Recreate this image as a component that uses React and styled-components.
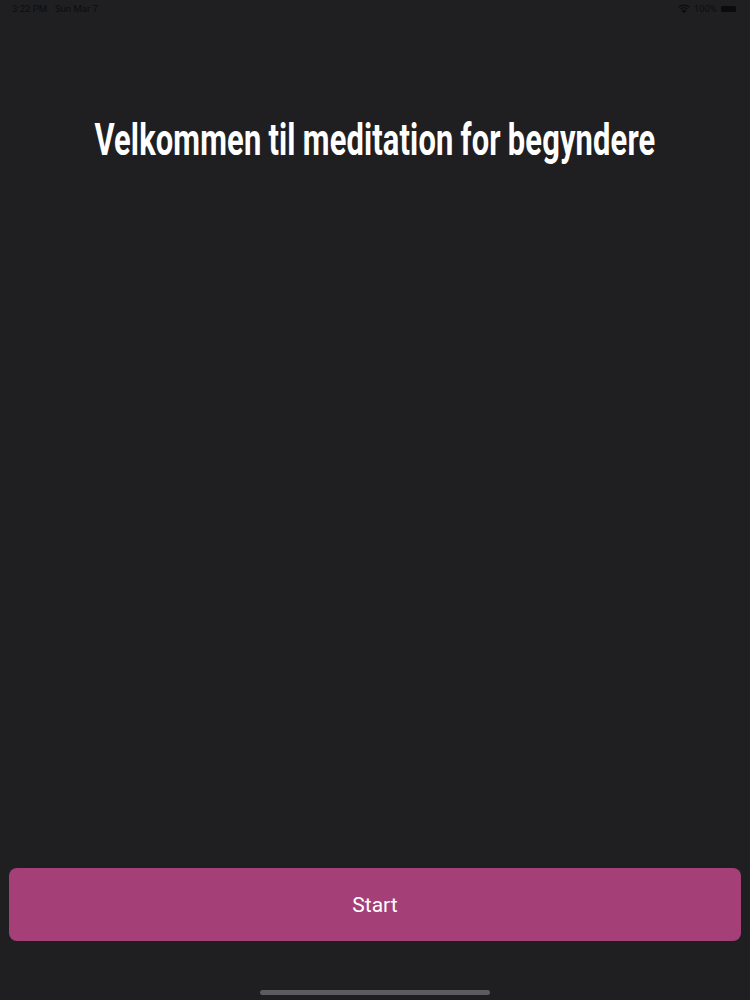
import styled, { createGlobalStyle } from "styled-components";

const GlobalStyle = createGlobalStyle`
  html, body {
    margin: 0;
    padding: 0;
    background-color: #1f1f21;
  }
`;

const Screen = styled.div`
  width: 750px;
  height: 1000px;
  background-color: #1f1f21;
  display: flex;
  flex-direction: column;
  overflow: hidden;
  font-family: "Roboto", "Liberation Sans", sans-serif;
`;

const StatusBar = styled.div`
  height: 17px;
  padding: 0 14px 0 12px;
  display: flex;
  align-items: center;
  justify-content: space-between;
  color: #0d0d0e;
  font-size: 9.5px;
`;

const StatusGroup = styled.div`
  display: flex;
  align-items: center;
  gap: ${(p) => p.$gap}px;
`;

const Battery = styled.div`
  width: 15px;
  height: 6px;
  background-color: #0b0b0c;
  border-radius: 1.5px;
`;

const TitleArea = styled.div`
  height: 249px;
  padding-top: 100px;
  box-sizing: border-box;
  display: flex;
  justify-content: center;
`;

const Title = styled.h1`
  margin: 0;
  height: 46px;
  line-height: 46px;
  white-space: nowrap;
  color: #ffffff;
  font-family: "Roboto", sans-serif;
  font-size: 45px;
  font-weight: 700;
  letter-spacing: 0.2px;
  word-spacing: -1px;
  transform: scaleX(0.686);
`;

const Spacer = styled.div`
  flex: 1;
`;

const Footer = styled.div`
  padding: 0 9px;
`;

const StartButton = styled.button`
  width: 100%;
  height: 73px;
  border: none;
  border-radius: 8px;
  background-color: #a43f78;
  color: #ffffff;
  font-family: "Roboto", sans-serif;
  font-size: 21px;
  font-weight: 400;
`;

const HomeBar = styled.div`
  height: 59px;
  display: flex;
  align-items: flex-end;
  justify-content: center;
  padding-bottom: 5px;
  box-sizing: border-box;
`;

const HomeIndicator = styled.div`
  width: 230px;
  height: 5px;
  border-radius: 3px;
  background-color: #5c5c5e;
`;

export default function App() {
  return (
    <Screen>
      <GlobalStyle />
      <StatusBar>
        <StatusGroup $gap={8}>
          <span>3:22 PM</span>
          <span>Sun Mar 7</span>
        </StatusGroup>
        <StatusGroup $gap={4}>
          <svg width="12" height="9" viewBox="0 0 12 9" fill="none" stroke="#0d0d0e" strokeWidth="1.3">
            <path d="M0.7 3.2 C3.7 0.4 8.3 0.4 11.3 3.2" />
            <path d="M2.6 5.1 C4.6 3.4 7.4 3.4 9.4 5.1" />
            <path d="M4.5 7 C5.4 6.3 6.6 6.3 7.5 7 L6 8.4 Z" fill="#0d0d0e" />
          </svg>
          <span>100%</span>
          <Battery />
        </StatusGroup>
      </StatusBar>
      <TitleArea>
        <Title>Velkommen til meditation for begyndere</Title>
      </TitleArea>
      <Spacer />
      <Footer>
        <StartButton>Start</StartButton>
      </Footer>
      <HomeBar>
        <HomeIndicator />
      </HomeBar>
    </Screen>
  );
}
